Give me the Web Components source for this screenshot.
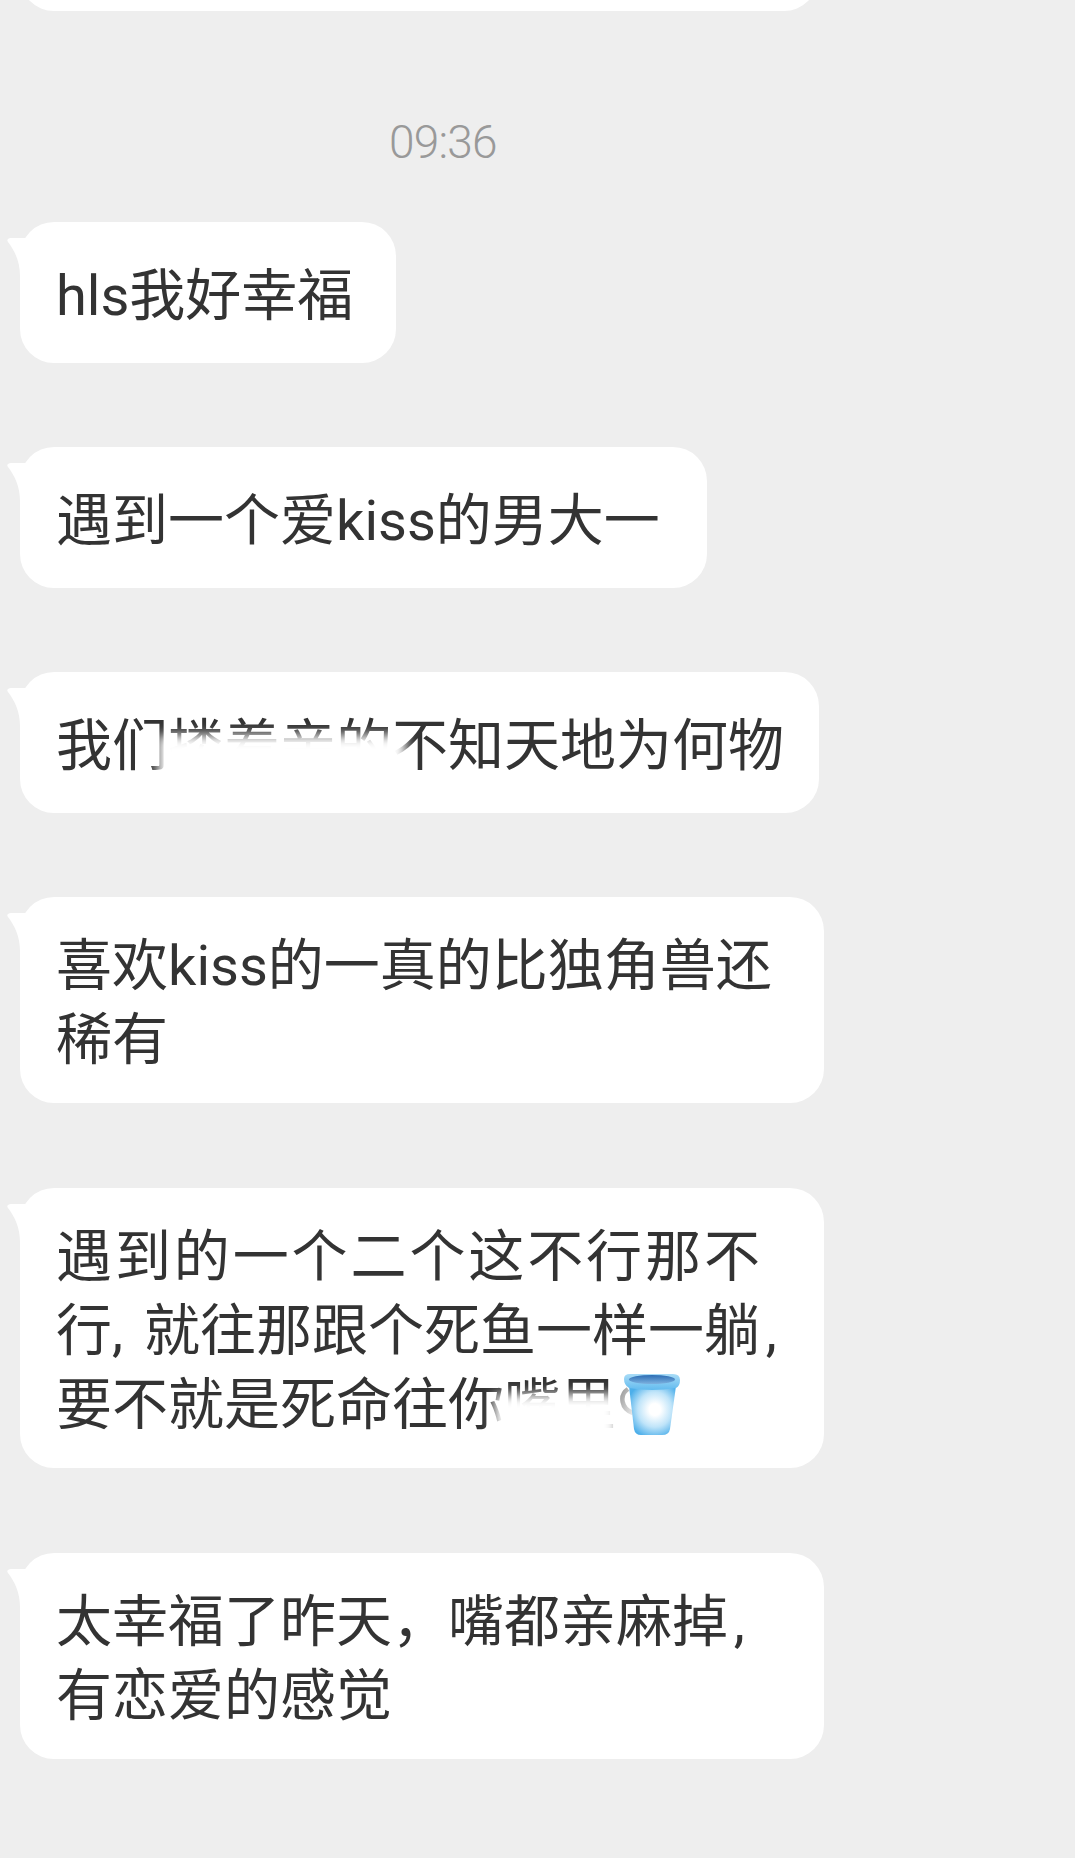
<!DOCTYPE html>
<html lang="zh">
<head>
<meta charset="utf-8">
<style>
html, body { margin: 0; padding: 0; background: #eee; }
body { height: 1858px; overflow: hidden; font-family: Roboto, "Noto Sans CJK SC", sans-serif; }
</style>
</head>
<body>
<chat-thread>
  <chat-bubble cut></chat-bubble>
  <chat-time>09:36</chat-time>
  <chat-bubble style="width:376px">hls我好幸福</chat-bubble>
  <chat-bubble style="width:687px">遇到一个爱kiss的男大一</chat-bubble>
  <chat-bubble style="width:799px">我们<smudge-text w="224">搂着亲的</smudge-text>不知天地为何物</chat-bubble>
  <chat-bubble style="width:804px;margin-bottom:1px">
    <bubble-line>喜欢kiss的一真的比独角兽还</bubble-line>
    <bubble-line>稀有</bubble-line>
  </chat-bubble>
  <chat-bubble style="width:804px;margin-bottom:1px">
    <bubble-line style="letter-spacing:2.9px">遇到的一个二个这不行那不</bubble-line>
    <bubble-line style="word-spacing:7px">行, 就往那跟个死鱼一样一躺&#8202;,</bubble-line>
    <bubble-line>要不就是死命往你<smudge-text w="112" style="--r:-2px">嘴里</smudge-text><bucket-emoji></bucket-emoji></bubble-line>
  </chat-bubble>
  <chat-bubble style="width:804px">
    <bubble-line>太幸福了昨天，嘴都亲麻掉&#8202;,</bubble-line>
    <bubble-line>有恋爱的感觉</bubble-line>
  </chat-bubble>
</chat-thread>
<script>
class ChatThread extends HTMLElement {
  constructor() {
    super()
    this.attachShadow({ mode: 'open' }).innerHTML = `
      <style>
        :host { display: flex; flex-direction: column; align-items: flex-start; gap: 84px; }
      </style>
      <slot></slot>`
  }
}

class ChatTime extends HTMLElement {
  constructor() {
    super()
    this.attachShadow({ mode: 'open' }).innerHTML = `
      <style>
        :host {
          display: block; align-self: stretch; box-sizing: border-box;
          padding-left: 389px; margin: 20px 0 -31px;
          font: 300 46px/54px Roboto, sans-serif; letter-spacing: -0.8px; color: #999;
        }
      </style>
      <slot></slot>`
  }
}

class ChatBubble extends HTMLElement {
  constructor() {
    super()
    this.attachShadow({ mode: 'open' }).innerHTML = `
      <style>
        :host {
          display: flex; align-items: center; position: relative; box-sizing: border-box;
          min-height: 141px; margin-left: 20px; padding: 32px 36px 26px;
          background: #fff; border-radius: 34px;
          font-size: 56px; line-height: 74px; color: #333;
          white-space: nowrap;
        }
        :host([cut]) { width: 798px; margin-top: -130px; }
        svg { position: absolute; left: -14px; top: 14px; }
      </style>
      <svg width="30" height="40" viewBox="0 0 30 40"><path d="M6 2 C3 2 0 3 2 6 C9 15 14 26 14 40 L30 40 L30 2 Z" fill="#fff"/></svg>
      <div><slot></slot></div>`
  }
}

class BubbleLine extends HTMLElement {
  constructor() {
    super()
    this.attachShadow({ mode: 'open' }).innerHTML = `
      <style>
        :host { display: block; }
      </style>
      <slot></slot>`
  }
}

class SmudgeText extends HTMLElement {
  constructor() {
    super()
    const w = this.getAttribute('w')
    this.attachShadow({ mode: 'open' }).innerHTML = `
      <style>
        :host { display: inline-block; position: relative; width: ${w}px; }
        i {
          position: absolute; left: -10px; right: var(--r, -14px); top: 26px; bottom: -8px;
          background: #fff; filter: blur(6px);
        }
      </style>
      <slot></slot><i></i>`
  }
}

class BucketEmoji extends HTMLElement {
  constructor() {
    super()
    this.attachShadow({ mode: 'open' }).innerHTML = `
      <style>
        :host { display: inline-block; position: relative; vertical-align: -12px; width: 64px; height: 64px; margin-left: 4px; }
        svg { display: block; }
      </style>
      <svg width="64" height="64" viewBox="0 0 64 64">
        <defs>
          <radialGradient id="body" cx="0.55" cy="0.48" r="0.6">
            <stop offset="0.2" stop-color="#fff"/>
            <stop offset="0.6" stop-color="#bfe4f9"/>
            <stop offset="1" stop-color="#4dafea"/>
          </radialGradient>
          <linearGradient id="rim" x1="0" y1="0" x2="0" y2="1">
            <stop offset="0" stop-color="#a9dcf7"/>
            <stop offset="1" stop-color="#62bbef"/>
          </linearGradient>
          <linearGradient id="inner" x1="0" y1="0" x2="0" y2="1">
            <stop offset="0" stop-color="#2c6db4"/>
            <stop offset="1" stop-color="#7db2e0"/>
          </linearGradient>
          <linearGradient id="handle" x1="0" y1="0" x2="1" y2="1">
            <stop offset="0" stop-color="#a0a0a0"/>
            <stop offset="1" stop-color="#e8e8e8"/>
          </linearGradient>
        </defs>
        <path d="M8 17 C-1 23 1 37 13 41" fill="none" stroke="url(#handle)" stroke-width="4.5"/>
        <path d="M9 14 L56 14 L50 57 Q49 63 42 63 L21 63 Q15 63 14 57 Z" fill="url(#body)"/>
        <path d="M4 7 Q4 2 10 2 L53 2 Q60 2 60 8 Q60 14 56 16 Q32 20 9 16 Q4 13 4 7 Z" fill="url(#rim)"/>
        <ellipse cx="32" cy="7.5" rx="23" ry="4.5" fill="url(#inner)"/>
      </svg>`
  }
}

customElements.define('chat-thread', ChatThread)
customElements.define('chat-time', ChatTime)
customElements.define('chat-bubble', ChatBubble)
customElements.define('bubble-line', BubbleLine)
customElements.define('smudge-text', SmudgeText)
customElements.define('bucket-emoji', BucketEmoji)
</script>
</body>
</html>
